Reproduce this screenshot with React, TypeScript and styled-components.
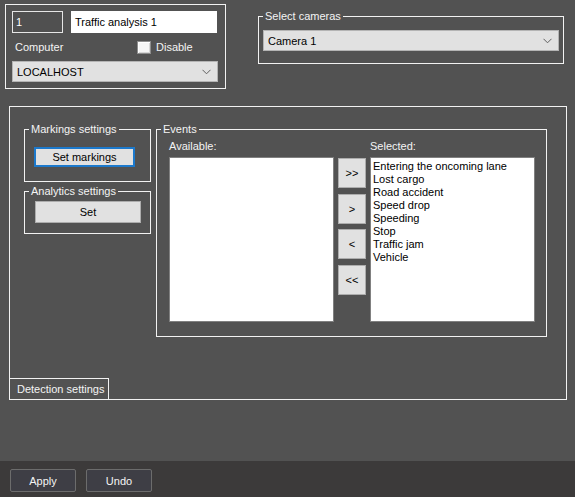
import React from "react";
import styled, { createGlobalStyle, css } from "styled-components";

const Global = createGlobalStyle`
  html, body { margin: 0; padding: 0; }
  body {
    width: 575px;
    height: 497px;
    overflow: hidden;
    background: #525252;
    font-family: "Liberation Sans", Arial, sans-serif;
    font-size: 11px;
    color: #ffffff;
  }
  * { box-sizing: border-box; }
`;

const Page = styled.div`
  display: flex;
  flex-direction: column;
  width: 575px;
  height: 497px;
`;

const Content = styled.div`
  flex: 1;
  display: flex;
  flex-direction: column;
`;

const TopRow = styled.div`
  display: flex;
  align-items: flex-start;
  padding: 4px 0 0 5px;
`;

const PlainBox = styled.div`
  width: 221px;
  height: 85px;
  border: 1px solid #f2f2f2;
  padding: 6px 0 0 6px;
  display: flex;
  flex-direction: column;
`;

const Row = styled.div<{ $mt?: number }>`
  display: flex;
  align-items: center;
  margin-top: ${(p) => p.$mt ?? 0}px;
`;

const TextInput = styled.div<{ $dark?: boolean; $w: number; $ml?: number }>`
  width: ${(p) => p.$w}px;
  height: 22px;
  margin-left: ${(p) => p.$ml ?? 0}px;
  padding: 0 3px;
  display: flex;
  align-items: center;
  font-size: 11px;
  ${(p) =>
    p.$dark
      ? css`
          background: #505050;
          border: 1px solid #e6e6e6;
          color: #ffffff;
        `
      : css`
          background: #ffffff;
          border: 1px solid #ffffff;
          color: #000000;
        `}
`;

const Label = styled.span<{ $w?: number; $ml?: number }>`
  display: inline-block;
  ${(p) => (p.$w ? `width: ${p.$w}px;` : "")}
  margin-left: ${(p) => p.$ml ?? 0}px;
  line-height: 13px;
  color: #f4f4f4;
  white-space: nowrap;
`;

const CheckBox = styled.span`
  width: 14px;
  height: 13px;
  border: 1px solid #8e8e8e;
  background: #f6f6f6;
  box-shadow: inset 1px 1px 0 #ffffff, inset -1px -1px 0 #d6d6d6;
`;

const Select = styled.div<{ $w: number }>`
  width: ${(p) => p.$w}px;
  height: 21px;
  background: #e1e1e1;
  border: 1px solid #b4b4b4;
  display: flex;
  align-items: center;
  justify-content: space-between;
  padding: 0 6px 0 4px;
  color: #000;
  font-size: 11px;
`;

const Chevron = () => (
  <svg width="9" height="6" viewBox="0 0 9 6">
    <polyline points="0.5,0.8 4.5,4.8 8.5,0.8" fill="none" stroke="#606060" strokeWidth="1" />
  </svg>
);

const Group = styled.fieldset<{ $w: number; $h?: number; $mt?: number; $ml?: number }>`
  margin: ${(p) => p.$mt ?? 0}px 0 0 ${(p) => p.$ml ?? 0}px;
  width: ${(p) => p.$w}px;
  ${(p) => (p.$h ? `height: ${p.$h}px;` : "")}
  border: 1px solid #f2f2f2;
  padding: 0;
  min-width: 0;
`;

const GroupBody = styled.div<{ $pad: string }>`
  padding: ${(p) => p.$pad};
`;

const Legend = styled.legend`
  padding: 0 2px;
  margin-left: 4px;
  line-height: 14px;
  font-size: 11px;
  color: #f4f4f4;
`;

const Panel = styled.div`
  margin: 17px 0 0 9px;
  width: 558px;
  height: 294px;
  border: 1px solid #f2f2f2;
  display: flex;
  flex-direction: column;
`;

const PanelBody = styled.div`
  display: flex;
  align-items: flex-start;
  padding: 15px 0 0 14px;
`;

const Column = styled.div`
  display: flex;
  flex-direction: column;
  width: 127px;
`;

const Button = styled.button<{ $w: number; $h: number; $focus?: boolean }>`
  width: ${(p) => p.$w}px;
  height: ${(p) => p.$h}px;
  margin: 0;
  padding: 0;
  background: #e1e1e1;
  border: ${(p) => (p.$focus ? "2px solid #1c79cc" : "1px solid #adadad")};
  font-family: "Liberation Sans", Arial, sans-serif;
  font-size: 11px;
  color: #000;
  display: flex;
  align-items: center;
  justify-content: center;
`;

const EventsGrid = styled.div`
  display: grid;
  grid-template-columns: 165px 28px 165px;
  column-gap: 4px;
  grid-template-rows: 14px 165px;
  row-gap: 4px;
`;

const ColLabel = styled.div<{ $col: number }>`
  grid-column: ${(p) => p.$col};
  line-height: 14px;
  color: #f4f4f4;
`;

const List = styled.div<{ $col: number }>`
  grid-column: ${(p) => p.$col};
  grid-row: 2;
  background: #ffffff;
  border: 1px solid #808080;
  padding: 2px 2px;
  color: #000;
`;

const ListItem = styled.div`
  line-height: 13px;
  white-space: nowrap;
`;

const ArrowColumn = styled.div`
  grid-column: 2;
  grid-row: 2;
  display: flex;
  flex-direction: column;
  gap: 5.7px;
  padding-top: 1px;
`;

const Tab = styled.div`
  margin-top: auto;
  width: 99px;
  height: 21px;
  border-top: 1px solid #f2f2f2;
  border-right: 1px solid #f2f2f2;
  padding-left: 7px;
  display: flex;
  align-items: center;
  font-size: 11px;
  color: #f4f4f4;
  white-space: nowrap;
`;

const BottomBar = styled.div`
  height: 36px;
  background: #3c3a3a;
  display: flex;
  align-items: flex-start;
  gap: 10px;
  padding: 8px 0 0 10px;
`;

const DarkButton = styled.button`
  width: 66px;
  height: 23px;
  margin: 0;
  padding: 0;
  background: #3e3e45;
  border: 1px solid #6c6c6c;
  border-radius: 2px;
  color: #f4f4f4;
  font-family: "Liberation Sans", Arial, sans-serif;
  font-size: 11px;
`;

const selected = [
  "Entering the oncoming lane",
  "Lost cargo",
  "Road accident",
  "Speed drop",
  "Speeding",
  "Stop",
  "Traffic jam",
  "Vehicle",
];

const arrows = [">>", ">", "<", "<<"];

export default function App() {
  return (
    <>
      <Global />
      <Page>
        <Content>
          <TopRow>
            <PlainBox>
              <Row>
                <TextInput $dark $w={51}>1</TextInput>
                <TextInput $w={146} $ml={8}>Traffic analysis 1</TextInput>
              </Row>
              <Row $mt={8}>
                <Label $w={122} $ml={3}>Computer</Label>
                <CheckBox />
                <Label $ml={5}>Disable</Label>
              </Row>
              <Row $mt={7}>
                <Select $w={206}>
                  <span>LOCALHOST</span>
                  <Chevron />
                </Select>
              </Row>
            </PlainBox>
            <Group $w={306} $h={55} $mt={5} $ml={32}>
              <Legend>Select cameras</Legend>
              <GroupBody $pad="7px 0 0 4px">
                <Select $w={296}>
                  <span>Camera 1</span>
                  <Chevron />
                </Select>
              </GroupBody>
            </Group>
          </TopRow>

          <Panel>
            <PanelBody>
              <Column>
                <Group $w={127}>
                  <Legend>Markings settings</Legend>
                  <GroupBody $pad="11px 0 14px 9px">
                    <Button $w={101} $h={20} $focus>Set markings</Button>
                  </GroupBody>
                </Group>
                <Group $w={127} $mt={2}>
                  <Legend>Analytics settings</Legend>
                  <GroupBody $pad="3px 0 10px 10px">
                    <Button $w={106} $h={22}>Set</Button>
                  </GroupBody>
                </Group>
              </Column>
              <Group $w={391} $ml={5}>
                <Legend>Events</Legend>
                <GroupBody $pad="3px 0 14px 12px">
                  <EventsGrid>
                    <ColLabel $col={1}>Available:</ColLabel>
                    <ColLabel $col={3}>Selected:</ColLabel>
                    <List $col={1} />
                    <ArrowColumn>
                      {arrows.map((a) => (
                        <Button key={a} $w={28} $h={30}>{a}</Button>
                      ))}
                    </ArrowColumn>
                    <List $col={3}>
                      {selected.map((s) => (
                        <ListItem key={s}>{s}</ListItem>
                      ))}
                    </List>
                  </EventsGrid>
                </GroupBody>
              </Group>
            </PanelBody>
            <Tab>Detection settings</Tab>
          </Panel>
        </Content>
        <BottomBar>
          <DarkButton>Apply</DarkButton>
          <DarkButton>Undo</DarkButton>
        </BottomBar>
      </Page>
    </>
  );
}
